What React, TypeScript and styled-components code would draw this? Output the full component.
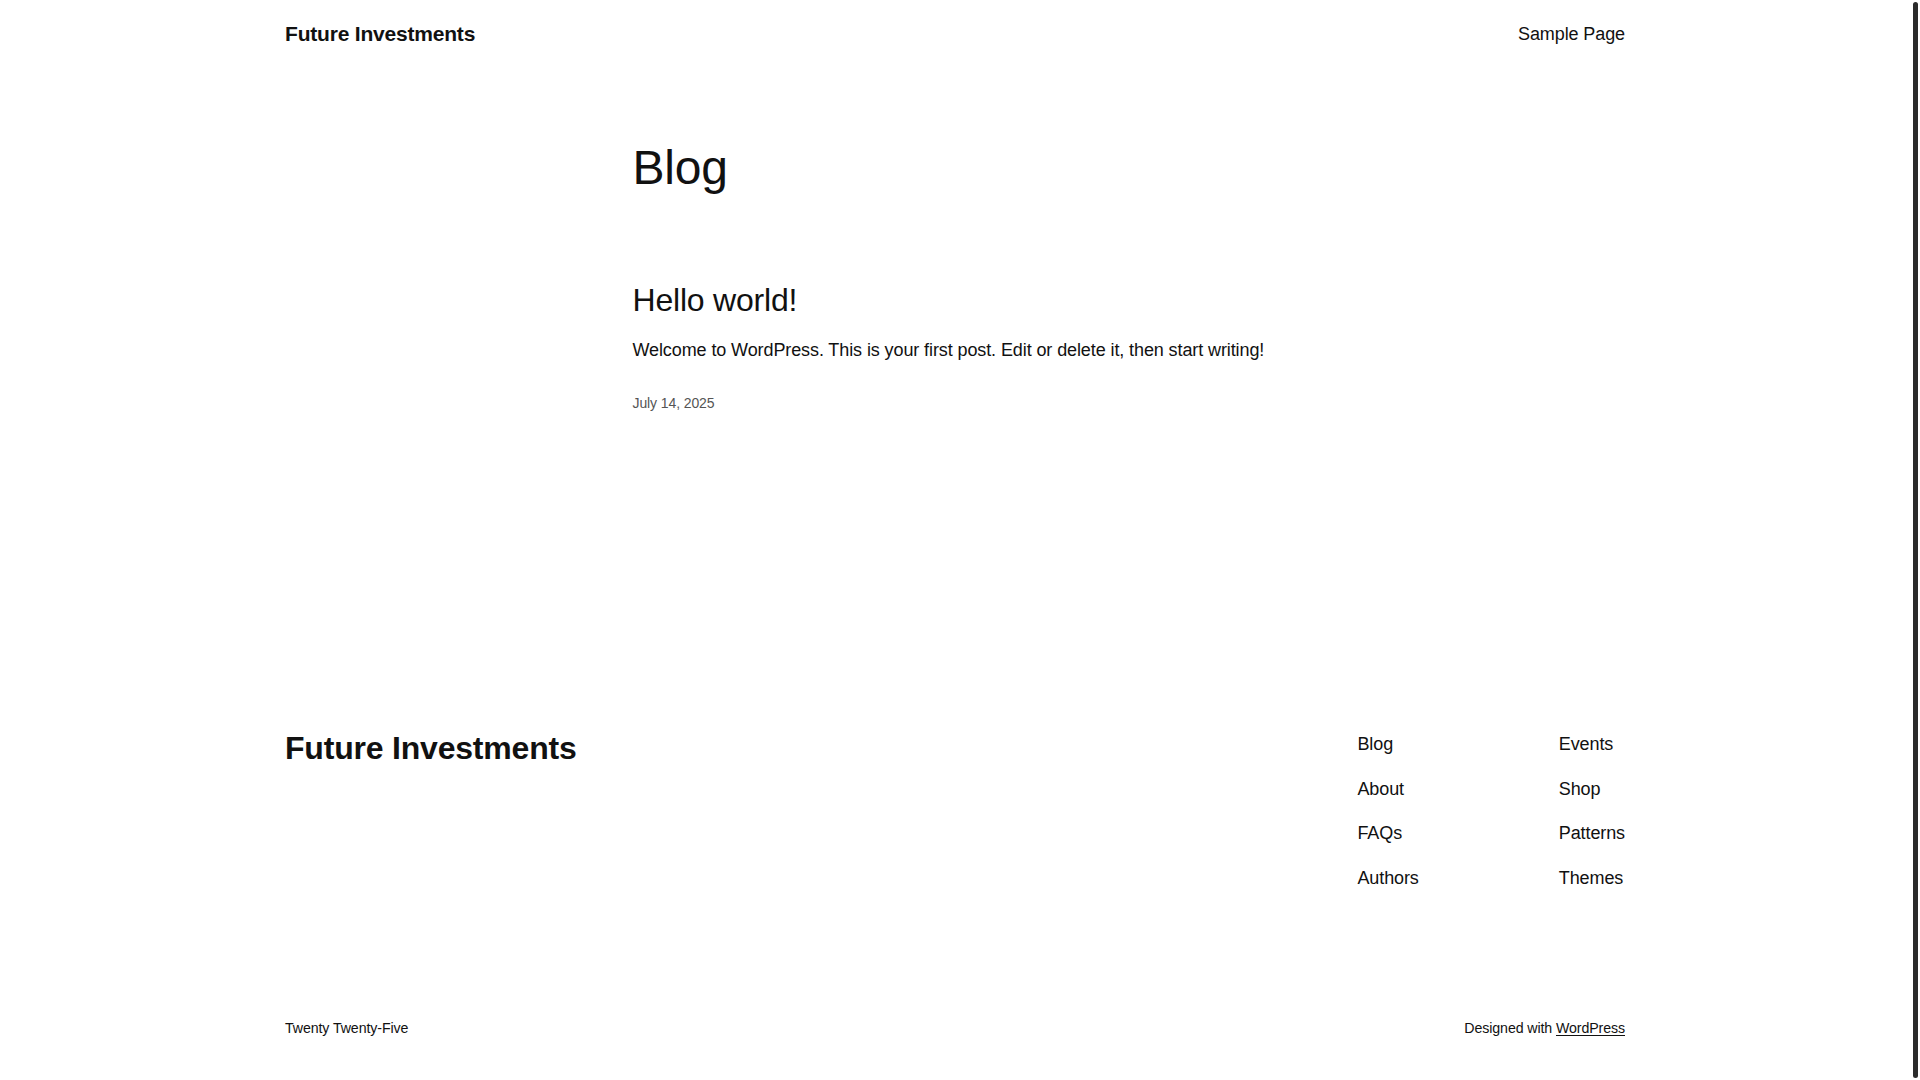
import styled, { createGlobalStyle } from "styled-components";

const GlobalStyle = createGlobalStyle`
  html, body {
    margin: 0;
    padding: 0;
    background: #ffffff;
  }
  body {
    font-family: "Liberation Sans", Arial, sans-serif;
    color: #111111;
    letter-spacing: -0.1px;
    -webkit-font-smoothing: antialiased;
  }
  * {
    box-sizing: border-box;
  }
`;

const footerLinks = [
  ["Blog", "About", "FAQs", "Authors"],
  ["Events", "Shop", "Patterns", "Themes"],
];

const App = () => {
  return (
    <>
      <GlobalStyle />
      <Page>
        <Header>
          <SiteTitle href="#">Future Investments</SiteTitle>
          <NavLink href="#">Sample Page</NavLink>
        </Header>

        <Main>
          <PageTitle>Blog</PageTitle>
          <Post>
            <PostTitle>
              <a href="#">Hello world!</a>
            </PostTitle>
            <Excerpt>
              Welcome to WordPress. This is your first post. Edit or delete it,
              then start writing!
            </Excerpt>
            <PostDate>July 14, 2025</PostDate>
          </Post>
        </Main>

        <Footer>
          <FooterTop>
            <FooterTitle href="#">Future Investments</FooterTitle>
            <FooterNav>
              {footerLinks.map((col, i) => (
                <FooterColumn key={i}>
                  {col.map((label) => (
                    <FooterLink key={label} href="#">
                      {label}
                    </FooterLink>
                  ))}
                </FooterColumn>
              ))}
            </FooterNav>
          </FooterTop>
          <FooterBottom>
            <SmallText>Twenty Twenty-Five</SmallText>
            <SmallText>
              Designed with <Underlined href="#">WordPress</Underlined>
            </SmallText>
          </FooterBottom>
        </Footer>
      </Page>
      <ScrollTrack>
        <ScrollThumb />
      </ScrollTrack>
    </>
  );
};
export default App;

const Page = styled.div`
  width: calc(100% - 10px);
  display: flex;
  flex-direction: column;
`;

const Wide = styled.div`
  width: 100%;
  max-width: 1340px;
  margin: 0 auto;
`;

const Header = styled(Wide)`
  display: flex;
  justify-content: space-between;
  align-items: center;
  padding: 20px 0;
  height: 68px;
`;

const SiteTitle = styled.a`
  font-size: 21px;
  font-weight: 700;
  line-height: 28px;
  color: #111111;
  text-decoration: none;
  letter-spacing: -0.2px;
`;

const NavLink = styled.a`
  font-size: 18px;
  line-height: 28px;
  color: #111111;
  text-decoration: none;
`;

const Main = styled.main`
  width: 100%;
  max-width: 645px;
  margin: 0 auto;
  padding-top: 71px;
`;

const PageTitle = styled.h1`
  margin: 0;
  font-size: 48px;
  font-weight: 400;
  line-height: 58px;
  letter-spacing: -0.2px;
`;

const Post = styled.article`
  margin-top: 84px;
  display: flex;
  flex-direction: column;
`;

const PostTitle = styled.h2`
  margin: 0;
  font-size: 32px;
  font-weight: 400;
  line-height: 38px;
  letter-spacing: -0.2px;

  a {
    color: #111111;
    text-decoration: none;
  }
`;

const Excerpt = styled.p`
  margin: 17px 0 0;
  font-size: 18px;
  line-height: 29px;
`;

const PostDate = styled.time`
  margin-top: 28px;
  font-size: 14px;
  line-height: 20px;
  color: #555555;
`;

const Footer = styled.footer``;

const FooterTop = styled(Wide)`
  display: flex;
  justify-content: space-between;
  align-items: flex-start;
  margin-top: 316px;
`;

const FooterTitle = styled.a`
  font-size: 32px;
  font-weight: 700;
  line-height: 38px;
  color: #111111;
  text-decoration: none;
  letter-spacing: -0.2px;
`;

const FooterNav = styled.nav`
  display: flex;
  gap: 140px;
  padding-top: 1px;
`;

const FooterColumn = styled.div`
  display: flex;
  flex-direction: column;
  gap: 16.5px;
`;

const FooterLink = styled.a`
  font-size: 18px;
  line-height: 28px;
  color: #111111;
  text-decoration: none;
`;

const FooterBottom = styled(Wide)`
  display: flex;
  justify-content: space-between;
  align-items: center;
  margin-top: 126px;
  padding-bottom: 52px;
`;

const SmallText = styled.span`
  font-size: 14.2px;
  line-height: 20px;
  color: #111111;
`;

const Underlined = styled.a`
  color: #111111;
  text-decoration: underline;
  text-underline-offset: 2px;
`;

const ScrollTrack = styled.div`
  position: fixed;
  top: 0;
  right: 0;
  bottom: 0;
  width: 10px;
  background: #ffffff;
  padding: 2px 2px;
`;

const ScrollThumb = styled.div`
  width: 5px;
  height: 100%;
  margin-left: auto;
  border-radius: 3px;
  background: #2b2b2b;
`;
